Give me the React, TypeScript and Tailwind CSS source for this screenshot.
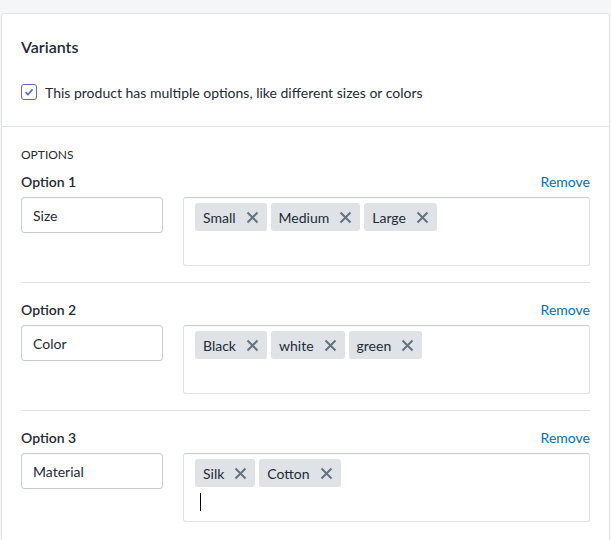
import React from 'react';

type Option = { label: string; name: string; values: string[]; typing?: boolean };

const options: Option[] = [
  { label: 'Option 1', name: 'Size', values: ['Small', 'Medium', 'Large'] },
  { label: 'Option 2', name: 'Color', values: ['Black', 'white', 'green'] },
  { label: 'Option 3', name: 'Material', values: ['Silk', 'Cotton'], typing: true },
];

function XIcon() {
  return (
    <svg width="13" height="13" viewBox="0 0 13 13" className="ml-[10px] shrink-0">
      <path d="M1.5 1.5 L11.5 11.5 M11.5 1.5 L1.5 11.5" stroke="#637381" strokeWidth="2" strokeLinecap="butt" />
    </svg>
  );
}

function Tag({ text }: { text: string }) {
  return (
    <span className="flex h-[28px] items-center rounded-[3px] bg-[#dfe3e8] px-[8px] text-[14px] text-[#212b36]">
      {text}
      <XIcon />
    </span>
  );
}

function OptionRow({ option, last }: { option: Option; last: boolean }) {
  return (
    <div className={last ? 'pt-0' : 'border-b border-[#dfe3e8] pb-4'}>
      <div className="flex h-5 items-center justify-between">
        <span className="text-[14px] font-semibold text-[#212b36]">{option.label}</span>
        <span className="text-[14px] text-[#006fbb]">Remove</span>
      </div>
      <div className="mt-1.5 flex gap-[20px]">
        <div className="flex h-[36px] w-[142px] shrink-0 items-center rounded-[3px] border border-[#c4cdd5] px-[11px] text-[14px] text-[#212b36]">
          {option.name}
        </div>
        <div className="flex h-[69px] flex-1 flex-wrap content-start gap-x-[4px] rounded-[3px] border border-[#dfe3e8] border-t-[#c4cdd5] py-[5px] pl-[11px] pr-[5px]">
          {option.values.map((v) => (
            <Tag key={v} text={v} />
          ))}
          {option.typing && (
            <div className="mt-[2px] flex h-[26px] w-full items-center pl-[5px]">
              <span className="h-[18px] w-px bg-black" />
            </div>
          )}
        </div>
      </div>
    </div>
  );
}

export default function App() {
  return (
    <div className="min-h-screen bg-[#f4f6f8] pt-[13px] pl-[1px] font-['Segoe_UI',Lato,'Noto_Sans',sans-serif]">
      <div className="w-[609px] overflow-hidden rounded-[3px] border border-[#dfe3e8] bg-white">
        <div className="border-b border-[#dfe3e8] px-[19px] pt-[21px] pb-[24px]">
          <h2 className="text-[16px] font-semibold leading-6 text-[#212b36]">Variants</h2>
          <label className="mt-[23px] flex h-5 items-center gap-[8px] text-[14px] text-[#212b36]">
            <span className="flex h-[16px] w-[16px] items-center justify-center rounded-[3px] border border-[#5c6ac4] bg-white">
              <svg width="10" height="10" viewBox="0 0 10 10">
                <path d="M1.5 5.2 L4 7.6 L8.6 2.4" fill="none" stroke="#5c6ac4" strokeWidth="1.6" />
              </svg>
            </span>
            This product has multiple options, like different sizes or colors
          </label>
        </div>
        <div className="px-[19px] pt-[20px] pb-[20px]">
          <div className="h-4 text-[12px] leading-4 text-[#212b36]">OPTIONS</div>
          <div className="mt-2 flex flex-col gap-4">
            {options.map((o, i) => (
              <OptionRow key={o.label} option={o} last={i === options.length - 1} />
            ))}
          </div>
        </div>
      </div>
    </div>
  );
}
